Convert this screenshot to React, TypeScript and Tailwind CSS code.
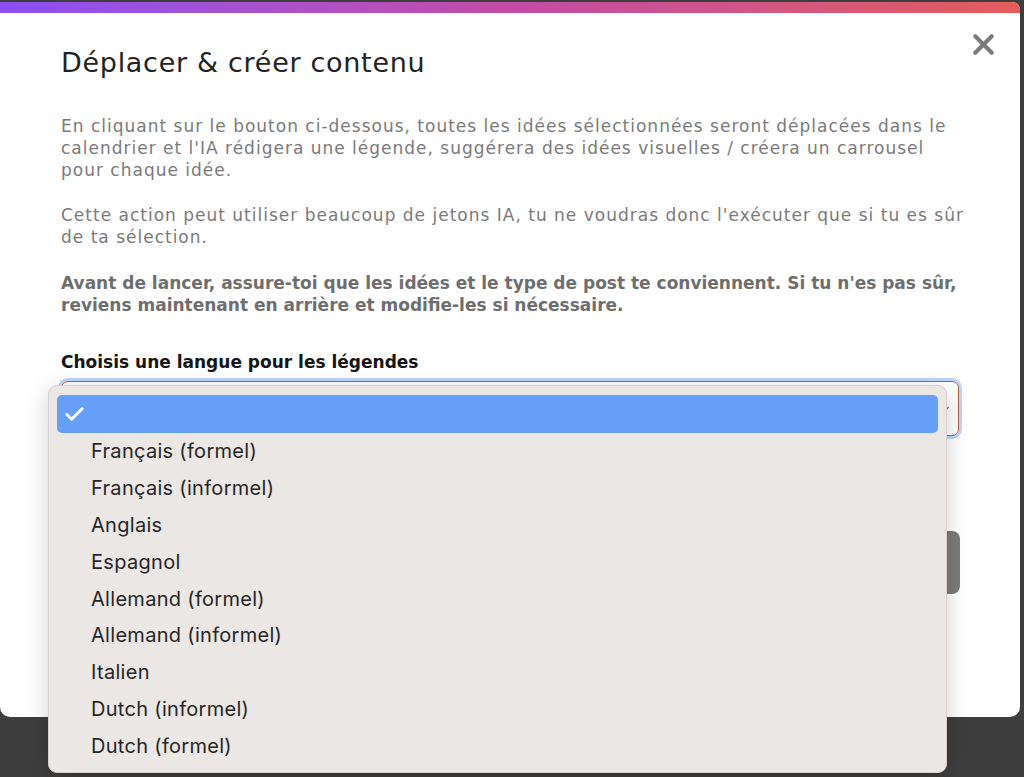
import { Check, ChevronDown, X } from "lucide-react"

const languages = [
    "Français (formel)",
    "Français (informel)",
    "Anglais",
    "Espagnol",
    "Allemand (formel)",
    "Allemand (informel)",
    "Italien",
    "Dutch (informel)",
    "Dutch (formel)",
]

function LanguageMenu() {
    return (
        <div
            className="absolute left-[48px] top-[385px] w-[899px] h-[388px] rounded-[9px] border border-[#d6d1ce] bg-[#ebe7e4] shadow-[0_6px_24px_rgba(0,0,0,0.18)] pt-[9px] px-[8px]"
            style={{ fontFamily: "Inter, 'Noto Sans', sans-serif" }}
        >
            <div className="h-[38px] rounded-[5px] bg-[#679ef7] flex items-center pl-[6px]">
                <Check className="w-[23px] h-[23px] text-white" strokeWidth={3} />
            </div>
            {languages.map((lang) => (
                <div
                    key={lang}
                    className="h-[36.8px] flex items-center pl-[34px] text-[20px] tracking-[0.3px] text-[#262626]"
                >
                    {lang}
                </div>
            ))}
        </div>
    )
}

export default function App() {
    return (
        <div className="relative w-[1024px] h-[777px] overflow-hidden bg-[#3e3e3e] pt-[2px]">
            <div
                className="w-[1020px] h-[715px] bg-white rounded-tr-[8px] rounded-b-[10px] overflow-hidden"
                style={{ fontFamily: "'DejaVu Sans', 'Noto Sans', sans-serif" }}
            >
                <div className="h-[11px] bg-gradient-to-r from-[#8b4ef5] via-[#c34aa5] to-[#e35d5a]" />

                <div className="relative px-[61px] pt-[31px]">
                    <button className="absolute right-[20px] top-[15px] text-[#7b7b7b]" aria-label="Fermer">
                        <X className="w-[33px] h-[33px]" strokeWidth={3} />
                    </button>

                    <h2 className="text-[27px] leading-[38px] font-medium text-[#222] tracking-[0.7px]">
                        Déplacer &amp; créer contenu
                    </h2>

                    <div className="mt-[33px] w-[910px] text-[17px] leading-[22px] text-[#7a7a7a]">
                        <p className="tracking-[1px]">
                            En cliquant sur le bouton ci-dessous, toutes les idées sélectionnées seront déplacées dans le
                            calendrier et l'IA rédigera une légende, suggérera des idées visuelles / créera un carrousel
                            pour chaque idée.
                        </p>
                        <p className="mt-[23px] tracking-[1px]">
                            Cette action peut utiliser beaucoup de jetons IA, tu ne voudras donc l'exécuter que si tu es sûr
                            de ta sélection.
                        </p>
                        <p className="mt-[24px] font-bold text-[#6e6e6e]">
                            Avant de lancer, assure-toi que les idées et le type de post te conviennent. Si tu n'es pas sûr,
                            reviens maintenant en arrière et modifie-les si nécessaire.
                        </p>
                    </div>

                    <label className="block mt-[35px] text-[17px] leading-[22px] font-semibold text-[#151515]">
                        Choisis une langue pour les légendes
                    </label>

                    <div className="mt-[8px] h-[55px] w-[898px] rounded-[7px] border border-[#c0564a] ring-[3px] ring-[#bcd6f5] flex items-center justify-end pr-[6px]">
                        <ChevronDown className="w-[14px] h-[14px] text-[#777]" strokeWidth={2} />
                    </div>

                    <div className="mt-[95px] flex justify-end w-[899px]">
                        <button className="h-[63px] w-[220px] rounded-[8px] bg-[#7b7b7b] text-white text-[16px] font-semibold">
                            Déplacer &amp; créer
                        </button>
                    </div>
                </div>
            </div>

            <LanguageMenu />
        </div>
    )
}
